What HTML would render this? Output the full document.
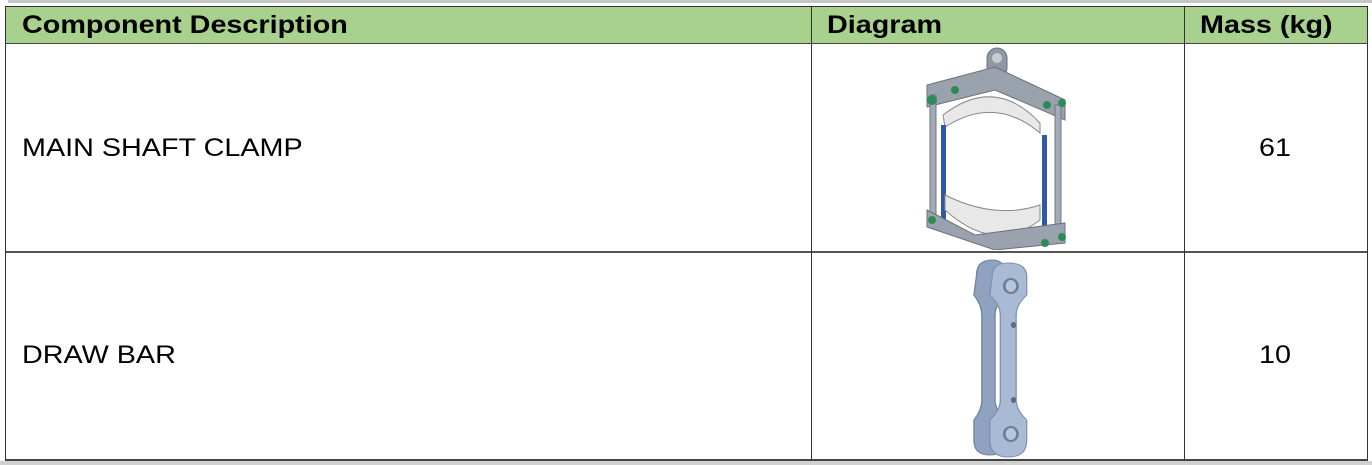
<!DOCTYPE html>
<html><head><meta charset="utf-8"><style>
html,body{margin:0;padding:0;width:1372px;height:465px;overflow:hidden;background:#fff;font-family:"Liberation Sans",Arial,sans-serif;}
.a{position:absolute;}
.h{font-weight:bold;font-size:25px;color:#000;top:11px;transform:scaleX(1.15);transform-origin:left center;}
.t{font-size:25px;color:#000;transform:scaleX(1.15);transform-origin:left center;}
</style></head><body>
<div class="a" style="left:8px;top:0;width:1364px;height:3px;background:#c6c6c6"></div>
<div class="a" style="left:0;top:461px;width:1372px;height:4px;background:#d0d0d0"></div>
<div class="a" style="left:5px;top:7px;width:1363px;height:36px;background:#a9d18e"></div>
<div class="a" style="left:5px;top:6px;width:1363px;height:1px;background:#333"></div>
<div class="a" style="left:5px;top:43px;width:1363px;height:1px;background:#444"></div>
<div class="a" style="left:5px;top:251px;width:1363px;height:2px;background:#555"></div>
<div class="a" style="left:5px;top:459px;width:1363px;height:2px;background:#444"></div>
<div class="a" style="left:5px;top:6px;width:1px;height:455px;background:#333"></div>
<div class="a" style="left:811px;top:6px;width:1px;height:455px;background:#333"></div>
<div class="a" style="left:1184px;top:6px;width:1px;height:455px;background:#333"></div>
<div class="a" style="left:1367px;top:6px;width:1px;height:455px;background:#333"></div>
<div class="a h" style="left:22px">Component Description</div>
<div class="a h" style="left:827px">Diagram</div>
<div class="a h" style="left:1200px">Mass (kg)</div>
<div class="a t" style="left:22px;top:134px">MAIN SHAFT CLAMP</div>
<div class="a t" style="left:1259px;top:134px">61</div>
<div class="a t" style="left:22px;top:341px">DRAW BAR</div>
<div class="a t" style="left:1259px;top:341px">10</div>
<svg class="a" style="left:915px;top:45px" width="160" height="205" viewBox="0 0 160 205">
<rect x="72" y="3" width="20" height="30" rx="10" fill="#8f98a4" stroke="#6a717c"/>
<circle cx="82" cy="13" r="5" fill="#c8ccd2"/>
<polygon points="12,40 80,22 150,55 150,75 80,45 12,62" fill="#9aa2ae" stroke="#6a717c"/>
<path d="M28,70 Q80,30 125,78 L125,88 Q80,50 30,82Z" fill="#e8e8e8" stroke="#888"/>
<rect x="15" y="50" width="6" height="125" fill="#a3abb6" stroke="#707780"/>
<rect x="140" y="60" width="6" height="125" fill="#a3abb6" stroke="#707780"/>
<rect x="26" y="80" width="5" height="95" fill="#2f58a8"/>
<rect x="127" y="90" width="5" height="95" fill="#2f58a8"/>
<path d="M30,150 Q80,175 125,160 L125,175 Q80,210 30,165Z" fill="#e8e8e8" stroke="#888"/>
<polygon points="12,165 60,190 150,178 150,198 80,205 12,182" fill="#9aa2ae" stroke="#6a717c"/>
<circle cx="17" cy="55" r="5" fill="#2e8b57"/><circle cx="40" cy="45" r="4" fill="#2e8b57"/>
<circle cx="132" cy="60" r="4" fill="#2e8b57"/><circle cx="147" cy="58" r="4" fill="#2e8b57"/>
<circle cx="17" cy="175" r="4" fill="#2e8b57"/><circle cx="130" cy="198" r="4" fill="#2e8b57"/><circle cx="147" cy="192" r="4" fill="#2e8b57"/>
</svg>
<svg class="a" style="left:966px;top:255px" width="66" height="205" viewBox="0 0 50 205" preserveAspectRatio="none">
<path d="M8,20 Q8,5 20,5 Q30,5 30,20 L30,40 Q22,50 22,60 L22,145 Q22,155 30,165 L30,185 Q30,200 18,200 Q6,200 6,185 L6,165 Q12,155 12,145 L12,60 Q12,50 6,40Z" fill="#8fa2c0" stroke="#6f829e"/>
<path d="M20,20 Q20,8 32,8 Q46,8 46,22 L46,40 Q38,50 38,60 L38,145 Q38,155 46,165 L46,185 Q46,202 32,202 Q18,202 18,185 L18,165 Q26,155 26,145 L26,60 Q26,50 18,40Z" fill="#a9bad4" stroke="#7f92ae"/>
<ellipse cx="34" cy="31" rx="5" ry="7" fill="#b8c6dc" stroke="#6a7c98" stroke-width="2"/>
<ellipse cx="34" cy="179" rx="5" ry="7" fill="#b8c6dc" stroke="#6a7c98" stroke-width="2"/>
<ellipse cx="36" cy="70" rx="2" ry="3" fill="#5a6b88"/><ellipse cx="36" cy="145" rx="2" ry="3" fill="#5a6b88"/>
</svg>
</body></html>
